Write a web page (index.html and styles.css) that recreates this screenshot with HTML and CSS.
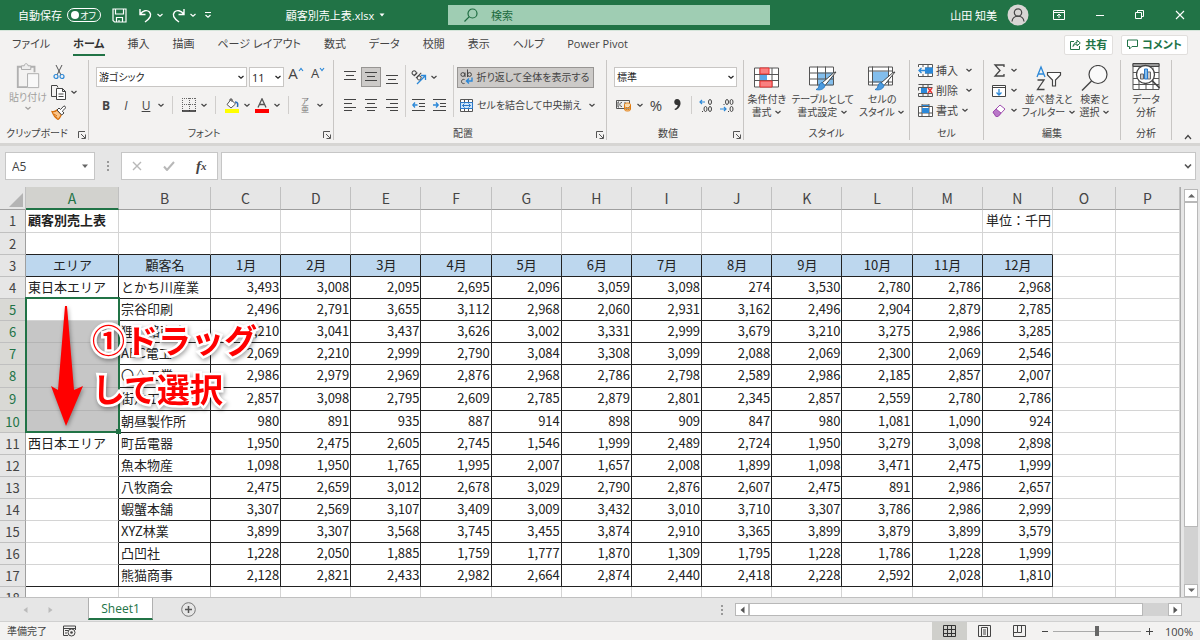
FILE: index.html
```html
<!DOCTYPE html>
<html lang="ja">
<head>
    <meta charset="UTF-8">
    <title>顧客別売上表.xlsx</title>
    <link rel="stylesheet" href="styles.css">
</head>
<body>

<!-- Shared icons -->
<svg class="symbols" aria-hidden="true">
    <symbol id="chev" viewBox="0 0 8 8"><path d="M1.5 3 L4 5.3 L6.5 3" fill="none" stroke="currentColor" stroke-width="1.2"/></symbol>
    <symbol id="launch" viewBox="0 0 8 8"><path d="M.5 7V.5H7M3 3l4 4M7.5 3.5v4h-4" fill="none" stroke="#555"/></symbol>
</svg>

<header class="titlebar">
    <div class="quick">
        <label class="autosave">自動保存
            <input type="checkbox">
            <span class="switch"><i></i>オフ</span>
        </label>
        <button class="save" aria-label="保存"><svg width="15" height="15" viewBox="0 0 15 15"><path d="M1 1h13v13H2.500L1 12.500zM3.500 1v5h8V1M4.500 14V9.500h6V14M7 12v2" fill="none" stroke="#fff" stroke-width="1.200"/></svg></button>
        <button aria-label="元に戻す"><svg width="15" height="15" viewBox="0 0 15 15"><path d="M2 1v5.500h5.500M2.300 6C5 2.500 9 1.500 11.500 4c2.500 3 1 6-4.500 10" fill="none" stroke="#fff" stroke-width="1.400"/></svg></button>
        <button class="drop"><svg width="8" height="8"><use href="#chev"/></svg></button>
        <button aria-label="やり直し"><svg width="15" height="15" viewBox="0 0 15 15"><path d="M13 1v5.500H7.500M12.700 6C10 2.500 6 1.500 3.500 4c-2.500 3-1 6 4.500 10" fill="none" stroke="#fff" stroke-width="1.400"/></svg></button>
        <button class="drop"><svg width="8" height="8"><use href="#chev"/></svg></button>
        <button aria-label="カスタマイズ"><svg width="8" height="8" viewBox="0 0 8 8"><path d="M1 1.500h6M1.500 4L4 6.300 6.500 4" fill="none" stroke="#fff" stroke-width="1.200"/></svg></button>
    </div>
    <button class="filename">顧客別売上表.xlsx <svg width="8" height="8" viewBox="0 0 8 8"><path d="M1.500 2.500h5L4 5.500z" fill="#fff"/></svg></button>
    <label class="search">
        <svg width="14" height="14" viewBox="0 0 14 14"><circle cx="8.500" cy="5.500" r="4.500" fill="none" stroke="#1d6b40" stroke-width="1.200"/><path d="M5.300 8.700L.5 13.500" stroke="#1d6b40" stroke-width="1.200"/></svg>
        <input type="text" placeholder="検索">
    </label>
    <div class="window">
        <span>山田 知美</span>
        <svg width="22" height="22" viewBox="0 0 22 22"><circle cx="11" cy="11" r="10.500" fill="#d8d6d4"/><circle cx="11" cy="8.500" r="3.700" fill="none" stroke="#444" stroke-width="1.200"/><path d="M5 17.500c.5-7 11.500-7 12 0" fill="none" stroke="#444" stroke-width="1.200"/></svg>
        <button class="mode" aria-label="リボンの表示"><svg width="12" height="10" viewBox="0 0 12 10"><path d="M.5.5h11v9H.5zM.5 2.500h11M6 8V4M4 6l2-2 2 2" fill="none" stroke="#fff"/></svg></button>
        <button aria-label="最小化"><svg width="10" height="10"><path d="M1 5.500h8" stroke="#fff"/></svg></button>
        <button aria-label="元のサイズ"><svg width="10" height="10" viewBox="0 0 10 10"><path d="M.5 2.500h6v6h-6zM2.500 2.500V.5h6v6h-2" fill="none" stroke="#fff"/></svg></button>
        <button aria-label="閉じる"><svg width="10" height="10"><path d="M1 1l8 8M9 1L1 9" stroke="#fff" stroke-width="1.100"/></svg></button>
    </div>
</header>

<nav class="tabs">
    <button>ファイル</button>
    <button class="active">ホーム</button>
    <button>挿入</button>
    <button>描画</button>
    <button>ページ レイアウト</button>
    <button>数式</button>
    <button>データ</button>
    <button>校閲</button>
    <button>表示</button>
    <button>ヘルプ</button>
    <button>Power Pivot</button>
    <div class="share">
        <button><svg width="11" height="11" viewBox="0 0 11 11"><path d="M4 2.500H.5v8h9V7M3 7.500c.5-3 2-4 4-4V1.200L10.300 4 7 6.800V5C5.500 5 4 5.500 3 7.500z" fill="none" stroke="#217346"/></svg>共有</button>
        <button><svg width="11" height="11" viewBox="0 0 11 11"><path d="M.5 1h10v6.500H5L2.500 10V7.500h-2z" fill="none" stroke="#217346"/></svg>コメント</button>
    </div>
</nav>

<div class="ribbon">
    <section class="group has-launcher">
        <div class="body clipboard">
            <button class="big paste">
                <svg width="26" height="28" viewBox="0 0 26 28"><path d="M6 4H2v22h10M16 4h4v6" fill="none" stroke="#b0b0b0" stroke-width="2"/><path d="M6 3h3c0-3 4-3 4 0h3v4H6z" fill="#eee" stroke="#aaa"/><path d="M12.500 11.500h12v15h-12z" fill="#f8f8f8" stroke="#aaa"/></svg>
                貼り付け
                <svg width="8" height="8"><use href="#chev"/></svg>
            </button>
            <div class="stack">
                <button class="tool" aria-label="切り取り"><svg width="12" height="16" viewBox="0 0 12 16"><path d="M3 1l5 10M9 1L4 11" stroke="#555" fill="none"/><circle cx="3" cy="12.500" r="2" fill="none" stroke="#2b88d8" stroke-width="1.200"/><circle cx="9" cy="12.500" r="2" fill="none" stroke="#2b88d8" stroke-width="1.200"/></svg></button>
                <div class="line">
                    <button class="tool" aria-label="コピー"><svg width="16" height="15" viewBox="0 0 16 15"><path d="M5 11.500H.5V.5H6l1 2" fill="none" stroke="#444"/><path d="M5.500 3.500h6l3 3v8h-9zM11.500 3.500v3h3M7.500 9h5M7.500 11.500h5" fill="#fff" stroke="#444"/></svg></button>
                    <button class="drop"><svg width="8" height="8"><use href="#chev"/></svg></button>
                </div>
                <button class="tool" aria-label="書式のコピー"><svg width="16" height="15" viewBox="0 0 16 15"><path d="M1 6.500c2 .5 3.500 0 5-1.500l4.500 4.500C9 12 9 13 7 14.500 4.500 13 2.500 10.500 1 6.500z" fill="#fbc58b" stroke="#d8700c" stroke-width="1.200"/><path d="M3 9l3 2M4.500 11.500l2 1.500" stroke="#d8700c"/><path d="M6 5l2-2 1.500 1.500L13 .8 15 2.500l-3.700 3.700L13 8l-2.300 2z" fill="#fff" stroke="#444"/></svg></button>
            </div>
        </div>
        <h2>クリップボード</h2>
        <button class="launcher" aria-label="クリップボードの詳細"><svg width="8" height="8"><use href="#launch"/></svg></button>
    </section>

    <section class="group has-launcher">
        <div class="body rows">
            <div class="line fontline">
                <span class="select font"><select aria-label="フォント"><option>游ゴシック</option></select><svg width="8" height="8"><use href="#chev"/></svg></span>
                <span class="select size"><select aria-label="サイズ"><option>11</option></select><svg width="8" height="8"><use href="#chev"/></svg></span>
                <button class="tool grow">A<svg width="6" height="5"><path d="M1 4l2-2.500L5 4" fill="none" stroke="#2b88d8" stroke-width="1.200"/></svg></button>
                <button class="tool shrink">A<svg width="6" height="5"><path d="M1 1l2 2.500L5 1" fill="none" stroke="#2b88d8" stroke-width="1.200"/></svg></button>
            </div>
            <div class="line">
                <button class="tool letter"><b>B</b></button>
                <button class="tool letter"><i>I</i></button>
                <button class="tool letter"><u>U</u></button>
                <button class="drop"><svg width="8" height="8"><use href="#chev"/></svg></button>
                <span class="sep"></span>
                <button class="tool" aria-label="罫線"><svg width="14" height="14" viewBox="0 0 14 14"><path d="M.5 0v13M13.500 0v13M7.500 0v13M0 .5h14M0 6.500h14" stroke="#666" stroke-dasharray="1 1"/><path d="M0 13h14" stroke="#222" stroke-width="1.500"/></svg></button>
                <button class="drop"><svg width="8" height="8"><use href="#chev"/></svg></button>
                <span class="sep"></span>
                <button class="tool" aria-label="塗りつぶしの色"><svg width="14" height="15" viewBox="0 0 14 15"><path d="M6 1.500L10.500 6 6 10 2 6.500zM5 3V1h2v3" fill="#fff" stroke="#555"/><path d="M10 4c3 0 3 2 2.500 5" fill="none" stroke="#2b6cb8" stroke-width="1.500"/><path d="M0 11h14v4H0z" fill="#ff0"/></svg></button>
                <button class="drop"><svg width="8" height="8"><use href="#chev"/></svg></button>
                <button class="tool" aria-label="フォントの色"><svg width="14" height="15" viewBox="0 0 14 15"><path d="M3 9.500L7 .8l4 8.700M4.500 6.500h5" fill="none" stroke="#555" stroke-width="1.300"/><path d="M0 11h14v4H0z" fill="#f00"/></svg></button>
                <button class="drop"><svg width="8" height="8"><use href="#chev"/></svg></button>
                <span class="sep"></span>
                <button class="tool ruby"><span>ア</span><span>亜</span></button>
                <button class="drop"><svg width="8" height="8"><use href="#chev"/></svg></button>
            </div>
        </div>
        <h2>フォント</h2>
        <button class="launcher" aria-label="フォントの詳細"><svg width="8" height="8"><use href="#launch"/></svg></button>
    </section>

    <section class="group has-launcher">
        <div class="body align">
            <div class="rows">
                <div class="line gap1">
                    <button class="tool" aria-label="上揃え"><svg width="12" height="14"><path d="M0 1.500h12M2 5.500h8M0 9.500h12" stroke="#444"/></svg></button>
                    <button class="tool pressed" aria-label="上下中央揃え"><svg width="12" height="14"><path d="M0 2.500h12M2 6.500h8M0 10.500h12" stroke="#444"/></svg></button>
                    <button class="tool" aria-label="下揃え"><svg width="12" height="14"><path d="M0 5.500h12M2 9.500h8M0 13.500h12" stroke="#444"/></svg></button>
                </div>
                <div class="line gap1">
                    <button class="tool" aria-label="左揃え"><svg width="12" height="14"><path d="M0 1.500h12M0 5.500h8M0 9.500h12M0 12.500h8" stroke="#444"/></svg></button>
                    <button class="tool" aria-label="中央揃え"><svg width="12" height="14"><path d="M0 1.500h12M2 5.500h8M0 9.500h12M2 12.500h8" stroke="#444"/></svg></button>
                    <button class="tool" aria-label="右揃え"><svg width="12" height="14"><path d="M0 1.500h12M4 5.500h8M0 9.500h12M4 12.500h8" stroke="#444"/></svg></button>
                </div>
            </div>
            <span class="sep tight tall"></span>
            <div class="rows">
                <div class="line">
                    <button class="tool" aria-label="方向"><svg width="16" height="16" viewBox="0 0 16 16"><g transform="rotate(45 6 6)" fill="none" stroke="#444"><circle cx="2.500" cy="6.500" r="2"/><path d="M4.500 4v5M7.500 1.500V9"/><circle cx="9.500" cy="6.500" r="2"/></g><path d="M6 15l8-8M10 6.500h4.500V11" fill="none" stroke="#2b88d8" stroke-width="1.300"/></svg></button>
                    <button class="drop"><svg width="8" height="8"><use href="#chev"/></svg></button>
                </div>
                <div class="line gap1">
                    <button class="tool" aria-label="インデントを減らす"><svg width="14" height="14"><path d="M0 1.500h13M7 5.500h6M7 8.500h6M0 12.500h13" stroke="#444"/><path d="M5.500 7H1M3 4.500L.8 7 3 9.500" fill="none" stroke="#2b88d8" stroke-width="1.300"/></svg></button>
                    <button class="tool" aria-label="インデントを増やす"><svg width="14" height="14"><path d="M0 1.500h13M7 5.500h6M7 8.500h6M0 12.500h13" stroke="#444"/><path d="M0 7h5M3 4.500L5.200 7 3 9.500" fill="none" stroke="#2b88d8" stroke-width="1.300"/></svg></button>
                </div>
            </div>
            <span class="sep tight tall"></span>
            <div class="rows">
                <div class="line"><button class="text pressed"><svg width="13" height="16" viewBox="0 0 13 16"><g fill="none" stroke="#444"><circle cx="2.800" cy="5.500" r="1.900"/><path d="M5 3.500V8M7.500.5V8M4.500 10.500c-4-1-4 5 0 4"/><circle cx="9.500" cy="5.500" r="1.900"/></g><path d="M12 8.500V12H7M9 9.500L6.500 12 9 14.500" fill="none" stroke="#2b88d8" stroke-width="1.400"/></svg>折り返して全体を表示する</button></div>
                <div class="line"><button class="text"><svg width="13" height="13" viewBox="0 0 13 13"><path d="M.5.5h12v12H.5zM4.500.5v3M8.500.5v3M4.500 9.500v3M8.500 9.500v3" fill="#fff" stroke="#555"/><path d="M.5 3.500h12v6H.5z" fill="#cfe6fa" stroke="#2b78c8"/><path d="M2.500 6.500h8M4.500 4.500l-2 2 2 2M8.500 4.500l2 2-2 2" fill="none" stroke="#2b78c8"/></svg>セルを結合して中央揃え</button><button class="drop"><svg width="8" height="8"><use href="#chev"/></svg></button></div>
            </div>
        </div>
        <h2>配置</h2>
        <button class="launcher" aria-label="配置の詳細"><svg width="8" height="8"><use href="#launch"/></svg></button>
    </section>

    <section class="group has-launcher">
        <div class="body rows">
            <div class="line"><span class="select format"><select aria-label="表示形式"><option>標準</option></select><svg width="8" height="8"><use href="#chev"/></svg></span></div>
            <div class="line gap1">
                <button class="tool" aria-label="通貨"><svg width="16" height="14" viewBox="0 0 16 14"><path d="M.5 2.500h13v8H.5z" fill="#eee" stroke="#555"/><path d="M6 4.500c-3 0-3 4 0 4M3 4H2v5h1M9 4v3" fill="none" stroke="#555"/><path d="M8.500 6.500c0-2 6-2 6 0v5c0 2-6 2-6 0zM8.500 8.500c1 1.500 5 1.500 6 0M8.500 10.500c1 1.500 5 1.500 6 0" fill="#fbd9a8" stroke="#e07b10"/></svg></button>
                <button class="drop"><svg width="8" height="8"><use href="#chev"/></svg></button>
                <button class="tool percent">%</button>
                <button class="tool" aria-label="桁区切り"><svg width="8" height="12" viewBox="0 0 8 12"><path d="M4 0c5 0 5 9-2 11l-.5-1C4 9 5 7 4.500 6 .5 7 0 0 4 0z" fill="#333"/></svg></button>
                <span class="sep tight"></span>
                <button class="tool" aria-label="小数点以下の表示桁数を増やす"><svg width="15" height="15" viewBox="0 0 15 15"><path d="M6 4H1M3 2L1 4l2 2" fill="none" stroke="#2b88d8" stroke-width="1.200"/><g fill="none" stroke="#444"><ellipse cx="11" cy="4" rx="1.500" ry="2.500"/><ellipse cx="6.500" cy="11" rx="1.500" ry="2.500"/><ellipse cx="11" cy="11" rx="1.500" ry="2.500"/><path d="M3 13.500h1"/></g></svg></button>
                <button class="tool" aria-label="小数点以下の表示桁数を減らす"><svg width="15" height="15" viewBox="0 0 15 15"><path d="M0 11h6M4 9l2 2-2 2" fill="none" stroke="#2b88d8" stroke-width="1.200"/><g fill="none" stroke="#444"><ellipse cx="7" cy="4" rx="1.500" ry="2.500"/><ellipse cx="11.500" cy="4" rx="1.500" ry="2.500"/><ellipse cx="11.500" cy="11" rx="1.500" ry="2.500"/><path d="M3.500 6.500h1M8 13.500h1"/></g></svg></button>
            </div>
        </div>
        <h2>数値</h2>
        <button class="launcher" aria-label="数値の詳細"><svg width="8" height="8"><use href="#launch"/></svg></button>
    </section>

    <section class="group">
        <div class="body bigs">
            <button class="big">
                <svg width="26" height="22" viewBox="0 0 26 22"><path d="M.5 1h24v19H.5zM6 1v19M18 1v19M.5 7.500h24M.5 13.500h24" fill="#fff" stroke="#555"/><path d="M6 1h9v6H6zM6 14h12v6H6z" fill="#f98080" stroke="#e33"/><path d="M6 8h7v5H6z" fill="#5aa7e8"/></svg>
                <span>条件付き<br>書式 <svg width="8" height="8"><use href="#chev"/></svg></span>
            </button>
            <button class="big">
                <svg width="28" height="25" viewBox="0 0 28 25"><path d="M.5 1.500h24v18H.5z" fill="#fff"/><path d="M9 7h15v13H9z" fill="#83beec"/><path d="M.5 1.500h24v18H.5zM8.500 1v19M16.500 1v19M.5 7.500h24M.5 13.500h24" fill="none" stroke="#555"/><path d="M27 6.500L16 20l-3-2.500L25 7z" fill="#fff" stroke="#444"/><path d="M13 17l3 3c-1 4-5 5-9 4 4-1 2-6 6-7z" fill="#4b9be0" stroke="#2878c0"/></svg>
                <span>テーブルとして<br>書式設定 <svg width="8" height="8"><use href="#chev"/></svg></span>
            </button>
            <button class="big">
                <svg width="28" height="25" viewBox="0 0 28 25"><path d="M.5 1.500h24v18H.5z" fill="#fff"/><path d="M5 6h15v11H5z" fill="#83beec"/><path d="M.5 1.500h24v18H.5zM4.500 1v19M20.500 1v19M.5 5.500h24M.5 16.500h24" fill="none" stroke="#555"/><path d="M27 6.500L16 20l-3-2.500L25 7z" fill="#fff" stroke="#444"/><path d="M13 17l3 3c-1 4-5 5-9 4 4-1 2-6 6-7z" fill="#4b9be0" stroke="#2878c0"/></svg>
                <span>セルの<br>スタイル <svg width="8" height="8"><use href="#chev"/></svg></span>
            </button>
        </div>
        <h2>スタイル</h2>
    </section>

    <section class="group">
        <div class="body cells">
            <button><svg width="15" height="13" viewBox="0 0 15 13"><path d="M.5.5h14v12H.5zM5 .5v12M10 .5v12M.5 4h14M.5 9h14" fill="#fff" stroke="#555"/><path d="M7 3.500h8v6H7z" fill="#2b88d8"/><path d="M0 3h7v7H0z" fill="#f3f2f1"/><path d="M7 6.500H1M3.500 4L1 6.500 3.500 9" fill="none" stroke="#2b88d8" stroke-width="1.300"/></svg>挿入<svg class="end" width="8" height="8"><use href="#chev"/></svg></button>
            <button><svg width="15" height="13" viewBox="0 0 15 13"><path d="M.5.500h14M.5 3.500h14M5 .5v3M10 .5v3M.5 9.500h14v3H.5zM5 9.500v3M10 9.500v3M.5 3.500v3" fill="none" stroke="#555"/><path d="M3 4h6v5H3z" fill="#2b88d8"/><path d="M10 4l4 5M14 4l-4 5" stroke="#e33" stroke-width="1.500"/></svg>削除<svg class="end" width="8" height="8"><use href="#chev"/></svg></button>
            <button><svg width="15" height="13" viewBox="0 0 15 13"><path d="M.5 2.500h14v10H.5zM4 0v13M11 0v13M.5 9h14M4 1h7" fill="#fff" stroke="#555"/><path d="M4 4h7v5H4z" fill="#2b88d8"/><path d="M4 1.500h7" stroke="#2b88d8"/></svg>書式<svg width="8" height="8"><use href="#chev"/></svg></button>
        </div>
        <h2>セル</h2>
    </section>

    <section class="group">
        <div class="body editing">
            <div class="cells">
                <button aria-label="合計"><svg width="15" height="13" viewBox="0 0 15 13"><path d="M12 3V1H3l5 5.500L3 12h9v-2" fill="none" stroke="#444" stroke-width="1.300"/></svg><svg width="8" height="8"><use href="#chev"/></svg></button>
                <button aria-label="フィル"><svg width="15" height="13" viewBox="0 0 15 13"><path d="M.5 1.500h13v11H.5zM.5 3.500h13" fill="#fff" stroke="#444"/><path d="M7 5v6M4.500 8.500L7 11l2.500-2.500" fill="none" stroke="#2b88d8" stroke-width="1.300"/></svg><svg width="8" height="8"><use href="#chev"/></svg></button>
                <button aria-label="クリア"><svg width="15" height="13" viewBox="0 0 15 13"><path d="M1 8l7-7 5 4-7 7.500H4z" fill="#fff" stroke="#a04fb0"/><path d="M1 8l3-3 5 4-3 3.500H4z" fill="#b978c8" stroke="#a04fb0"/></svg><svg width="8" height="8"><use href="#chev"/></svg></button>
            </div>
            <button class="big sort">
                <svg width="28" height="26" viewBox="0 0 28 26"><path d="M2 12L6 2l4 10M3.500 9h5" fill="none" stroke="#2b88d8" stroke-width="1.300"/><path d="M2.500 15H9L2.500 24.500h7" fill="none" stroke="#444" stroke-width="1.300"/><path d="M12.500 7.500h13v2.500l-5 5v6h-3v-6l-5-5z" fill="#fff" stroke="#444" stroke-width="1.200"/></svg>
                <span>並べ替えと<br>フィルター <svg width="8" height="8"><use href="#chev"/></svg></span>
            </button>
            <button class="big find">
                <svg width="28" height="26" viewBox="0 0 28 26"><circle cx="17" cy="9.500" r="9" fill="#fafafa" stroke="#444" stroke-width="1.200"/><path d="M10.500 16L1 25.500" stroke="#444" stroke-width="1.400"/></svg>
                <span>検索と<br>選択 <svg width="8" height="8"><use href="#chev"/></svg></span>
            </button>
        </div>
        <h2>編集</h2>
    </section>

    <section class="group">
        <div class="body bigs">
            <button class="big analyze">
                <svg width="28" height="28" viewBox="0 0 28 28"><path d="M1 1h26v26H1zM1 10h26M1 16h26M1 22h26M7 5v22M14 5v22M21 5v22" fill="#fff" stroke="#555"/><path d="M1 1h26v3H1z" fill="#999" stroke="#444"/><circle cx="13.500" cy="12" r="9" fill="#fff" stroke="#444" stroke-width="1.300"/><path d="M8.500 11.500h3v5h-3zM15.500 9.500h3v7h-3z" fill="#ccc" stroke="#666"/><path d="M12.500 6.500h3v10h-3z" fill="#83beec" stroke="#2b78c8"/><path d="M20 18l7.500 7.500" stroke="#444" stroke-width="1.600"/></svg>
                <span>データ<br>分析</span>
            </button>
        </div>
        <h2>分析</h2>
    </section>

    <button class="collapse" aria-label="リボンを折りたたむ"><svg width="8" height="6"><path d="M1 5l3-3.500L7 5" fill="none" stroke="#444" stroke-width="1.200"/></svg></button>
</div>

<div class="formulabar">
    <label class="namebox"><input type="text" value="A5" aria-label="名前ボックス"><svg width="8" height="8" viewBox="0 0 8 8"><path d="M1 2.500h6L4 6z" fill="#666"/></svg></label>
    <span class="dots"><i></i><i></i><i></i></span>
    <div class="fxbox">
        <button aria-label="キャンセル"><svg width="10" height="10"><path d="M1 1l8 8M9 1L1 9" stroke="#b8b8b8" stroke-width="1.400"/></svg></button>
        <button aria-label="入力"><svg width="12" height="10"><path d="M1 5.500L4 9l7-8" fill="none" stroke="#b8b8b8" stroke-width="2"/></svg></button>
        <button class="fx">f<sub>x</sub></button>
    </div>
    <label class="formula"><input type="text" aria-label="数式バー"><svg width="8" height="8" viewBox="0 0 8 8"><path d="M1 2.500L4 5.500l3-3" fill="none" stroke="#555" stroke-width="1.600"/></svg></label>
</div>

<main class="sheet">
    <div class="grid">
        <table id="sheet">
            <colgroup>
                <col class="rownum"><col class="area"><col class="client">
                <col span="12">
                <col class="blank-o"><col class="blank-p">
            </colgroup>
            <thead></thead>
            <tbody></tbody>
        </table>
        <div class="note">
            <svg width="36" height="124" viewBox="0 0 36 124"><path d="M17 1h2l7 84 9-4L18 121 3 81l7 4z" fill="#f00"/></svg>
            <p>①ドラッグ<br>して選択</p>
        </div>
    </div>
    <div class="vscroll">
        <button aria-label="上へ"><svg width="7" height="5"><path d="M0 4.500L3.500 1 7 4.500z" fill="#666"/></svg></button>
        <div class="track"><div class="thumb"></div></div>
        <button aria-label="下へ"><svg width="7" height="5"><path d="M0 .5L3.500 4 7 .5z" fill="#666"/></svg></button>
    </div>
</main>

<div class="sheettabs">
    <div class="arrows">
        <button aria-label="前のシート"><svg width="5" height="8"><path d="M4.500 1v6L.5 4z" fill="#bbb"/></svg></button>
        <button aria-label="次のシート"><svg width="5" height="8"><path d="M.5 1v6l4-3z" fill="#bbb"/></svg></button>
    </div>
    <button class="sheettab">Sheet1</button>
    <button class="add" aria-label="新しいシート"><svg width="15" height="15" viewBox="0 0 15 15"><circle cx="7.500" cy="7.500" r="6.800" fill="none" stroke="#777"/><path d="M7.500 4v7M4 7.500h7" stroke="#555" stroke-width="1.500"/></svg></button>
    <span class="dots"><i></i><i></i><i></i></span>
    <div class="hscroll">
        <button aria-label="左へ"><svg width="5" height="8"><path d="M4.500 .5v7L.5 4z" fill="#555"/></svg></button>
        <div class="track"><div class="thumb"></div></div>
        <button aria-label="右へ"><svg width="5" height="8"><path d="M.5 .5v7l4-3.500z" fill="#555"/></svg></button>
    </div>
</div>

<footer class="status">
    <span>準備完了</span>
    <svg width="13" height="12" viewBox="0 0 13 12"><path d="M5 10.500H.5V1h12v4M.5 3.500h12M2 5.500h3M2 8h2" fill="none" stroke="#444"/><circle cx="8.500" cy="7.500" r="3.500" fill="#f3f2f1" stroke="#444"/><circle cx="8.500" cy="7.500" r="1.300" fill="#444"/></svg>
    <div class="views">
        <button class="on" aria-label="標準"><svg width="13" height="12" viewBox="0 0 13 12"><path d="M.5.5h12v11H.5zM4.500 0v12M8.500 0v12M0 4.500h13M0 8.500h13" fill="none" stroke="#333"/></svg></button>
        <button aria-label="ページ レイアウト"><svg width="13" height="12" viewBox="0 0 13 12"><path d="M.5.5h12v11H.5zM3.500 2.500h6v9h-6zM5 5h3M5 7h3M5 9h3" fill="none" stroke="#444"/></svg></button>
        <button aria-label="改ページ プレビュー"><svg width="13" height="12" viewBox="0 0 13 12"><path d="M.5.5h12v11H.5zM4.500.5v7h4v-7M.5 7.500h4" fill="none" stroke="#444"/></svg></button>
    </div>
    <div class="zoom">
        <button aria-label="縮小"><svg width="8" height="8"><path d="M1 4.500h6" stroke="#444"/></svg></button>
        <input type="range" min="0" max="200" value="100" aria-label="ズーム">
        <button aria-label="拡大"><svg width="8" height="8"><path d="M1 4.500h7M4.500 1v7" stroke="#444"/></svg></button>
        <span>100%</span>
    </div>
</footer>

<script src="script.js"></script>
</body>
</html>
```

FILE: styles.css
```css
* {
    box-sizing: border-box;
}
body {
    margin: 0;
    height: 100vh;
    display: flex;
    flex-direction: column;
    overflow: hidden;
    background-color: #e6e6e6;
    color: #444;
    font-family: "Open Sans", "Noto Sans CJK JP", sans-serif;
    font-feature-settings: "palt";
    font-size: 10px;
    line-height: 13px;
}
button, input, select {
    margin: 0;
    padding: 0;
    border: 0;
    background: none;
    color: inherit;
    font: inherit;
    font-feature-settings: inherit;
}
button {
    display: flex;
    align-items: center;
    justify-content: center;
    white-space: nowrap;
}
svg {
    flex: none;
}
h2 {
    margin: 0;
    font-size: 10px;
    font-weight: normal;
}
.symbols {
    position: absolute;
    width: 0;
    height: 0;
}

/* Title bar */
.titlebar {
    display: grid;
    grid-template-columns: 248px 200px 322px 1fr;
    align-items: center;
    height: 31px;
    border-bottom: 1px solid #d5e5da;
    background-color: #217346;
    color: #fff;
    font-size: 11px;
}
.quick {
    display: flex;
    align-items: center;
    padding-left: 18px;
}
.quick button {
    margin-right: 2px;
}
.quick .drop {
    margin-right: 6px;
}
.quick .save {
    margin: 0 11px;
}
.autosave {
    display: flex;
    align-items: center;
    gap: 5px;
}
.autosave input {
    position: absolute;
    opacity: 0;
}
.switch {
    display: flex;
    align-items: center;
    justify-content: space-between;
    width: 34px;
    height: 14px;
    padding: 0 4px 0 3px;
    border: 1px solid #fff;
    border-radius: 7px;
    font-size: 9px;
}
.switch i {
    width: 8px;
    height: 8px;
    border-radius: 4px;
    background-color: #fff;
}
.filename {
    justify-self: center;
    gap: 4px;
    margin-right: 24px;
}
.search {
    display: flex;
    align-items: center;
    gap: 13px;
    height: 20px;
    padding-left: 16px;
    background-color: #9fcdb3;
}
.search input {
    flex: 1;
    min-width: 0;
}
.search input::placeholder {
    color: #1d6b40;
    opacity: 1;
}
.window {
    display: flex;
    align-items: center;
    justify-content: flex-end;
    gap: 10px;
    padding-right: 15px;
}
.window button + button {
    margin-left: 20px;
}
.window .mode {
    margin: 0 0 0 14px;
}

/* Tabs */
.tabs {
    display: flex;
    align-items: center;
    gap: 23px;
    height: 27px;
    padding: 0 12px;
    background-color: #f3f2f1;
    font-size: 11px;
}
.tabs > button {
    height: 23px;
    border-bottom: 2px solid transparent;
}
.tabs > .active {
    border-color: #217346;
    font-weight: bold;
    color: #333;
}
.share {
    display: flex;
    gap: 8px;
    margin-left: auto;
}
.share button {
    gap: 4px;
    height: 20px;
    padding: 0 5px;
    border: 1px solid #e1dfdd;
    border-radius: 2px;
    background-color: #fff;
    color: #217346;
    font-weight: bold;
}

/* Ribbon */
.ribbon {
    display: grid;
    grid-template-columns: 89px 245px 273px 137px 166px 74px 137px 51px 1fr;
    padding: 2px 0 3px;
    border-bottom: 3px solid #d6d5d3;
    background-color: #f3f2f1;
}
.group {
    position: relative;
    display: flex;
    flex-direction: column;
    border-right: 1px solid #c8c6c4;
}
.group h2 {
    height: 13px;
    text-align: center;
}
.body {
    height: 67px;
}
.clipboard {
    display: flex;
    padding: 2px 0 0 9px;
}
.has-launcher h2 {
    margin-right: 14px;
}
.launcher {
    position: absolute;
    right: 2px;
    bottom: 1px;
}
.rows {
    display: flex;
    flex-direction: column;
    padding-top: 3px;
}
.body.rows {
    padding-left: 7px;
}
.line {
    display: flex;
    align-items: center;
    height: 28px;
}
.gap1 {
    gap: 1px;
}
.fontline {
    gap: 2px;
}
.tool {
    width: 20px;
    height: 20px;
}
.drop {
    width: 10px;
    height: 20px;
}
.sep {
    width: 1px;
    height: 18px;
    margin: 0 6px;
    background-color: #d0cecc;
}
.sep.tight {
    margin: 0 3px;
}
.sep.tall {
    height: 52px;
    margin-top: 5px;
}
.pressed {
    border: 1px solid #979593;
    background-color: #cccac8;
}
.big {
    flex-direction: column;
    justify-content: flex-start;
    padding-top: 5px;
}
.big > svg:first-child {
    height: 28px;
    padding-bottom: 2px;
}
.paste {
    width: 38px;
    padding-top: 1px;
    color: #a19f9d;
}
.stack {
    display: flex;
    flex-direction: column;
    padding-left: 2px;
}
.stack .line {
    height: 20px;
}
.select {
    position: relative;
    height: 20px;
    border: 1px solid #c8c6c4;
    background-color: #fff;
    color: #222;
}
.select select {
    width: 100%;
    height: 18px;
    padding-left: 2px;
    appearance: none;
}
.select svg {
    position: absolute;
    right: 1px;
    top: 5px;
}
.font {
    width: 151px;
}
.size {
    width: 35px;
    font-size: 11px;
}
.format {
    width: 123px;
}
.grow {
    align-items: flex-start;
    font-size: 15px;
}
.shrink {
    align-items: flex-start;
    font-size: 13px;
}
.letter {
    font-size: 12px;
}
.ruby {
    flex-direction: column;
    font-size: 8px;
    line-height: 8px;
    color: #777;
}
.percent {
    font-size: 15px;
}
.align {
    display: flex;
    padding-left: 6px;
}
.text {
    gap: 4px;
    height: 21px;
    padding: 0 4px 0 2px;
    border: 1px solid transparent;
}
.text.pressed {
    width: 137px;
    border-color: #979593;
}
.bigs {
    display: flex;
    justify-content: center;
    gap: 5px;
}
.cells {
    display: flex;
    flex-direction: column;
    font-size: 11px;
}
.body.cells {
    padding-left: 8px;
}
.cells button {
    justify-content: flex-start;
    gap: 3px;
    height: 20px;
}
.cells .end {
    margin-left: 4px;
}
.editing {
    display: flex;
    justify-content: space-between;
    padding: 0 10px 0 8px;
}
.analyze {
    padding-top: 2px;
}
.analyze > svg:first-child {
    height: 31px;
}
.collapse {
    align-self: end;
    padding-left: 4px;
}

/* Formula bar */
.formulabar {
    display: flex;
    align-items: center;
    padding: 6px 4px 7px 5px;
}
.namebox, .fxbox, .formula {
    display: flex;
    align-items: center;
    height: 28px;
    border: 1px solid #c6c6c6;
    background-color: #fff;
}
.namebox {
    width: 90px;
    padding: 0 5px 0 6px;
    font-size: 12px;
}
.namebox input, .formula input {
    flex: 1;
    min-width: 0;
}
.dots {
    display: flex;
    flex-direction: column;
    gap: 2px;
    margin: 0 12px;
}
.dots i {
    width: 2px;
    height: 2px;
    background-color: #999;
}
.fxbox {
    justify-content: space-around;
    width: 97px;
    margin-right: 3px;
}
.fx {
    font-family: "Liberation Serif", serif;
    font-size: 15px;
    font-style: italic;
    font-weight: bold;
}
.fx sub {
    font-size: 11px;
}
.formula {
    flex: 1;
    padding-right: 3px;
}

/* Sheet */
.sheet {
    display: flex;
    flex: 1;
    min-height: 0;
    gap: 3px;
    padding-right: 2px;
}
.grid {
    position: relative;
    flex: 1;
    overflow: hidden;
    border-right: 1px solid #ababab;
    background-color: #fff;
    font-family: "Noto Sans CJK JP", sans-serif;
    font-feature-settings: normal;
    font-size: 13px;
    line-height: 18px;
}
#sheet {
    width: 100%;
    table-layout: fixed;
    border-collapse: separate;
    border-spacing: 0;
}
.rownum {
    width: 26px;
}
.area {
    width: 93px;
}
.client {
    width: 92px;
}
.blank-o {
    width: 63px;
}
.blank-p {
    width: 64px;
}
#sheet th, #sheet td {
    height: 22px;
    padding: 0 1px 2px 2px;
    border-right: 1px solid #d4d4d4;
    border-bottom: 1px solid #d4d4d4;
    color: #222;
    font-weight: normal;
    white-space: nowrap;
}
#sheet .first th, #sheet .first td, #sheet .high th, #sheet .high td, #sheet thead th {
    height: 23px;
}
#sheet thead th, #sheet tbody th {
    padding: 0;
    border-color: #c0c0c0;
    background-color: #e6e6e6;
    color: #444;
    text-align: center;
}
#sheet thead th {
    border-bottom-color: #9f9f9f;
    font-size: 14px;
}
#sheet tbody th {
    border-right-color: #9f9f9f;
}
#sheet thead th.picked {
    border-bottom: 2px solid #217346;
    background-color: #d2d2ce;
    color: #217346;
}
#sheet tbody th.picked {
    background-color: #d9d9d5;
    color: #217346;
}
#sheet .corner svg {
    display: block;
    margin: 3px 2px 0 auto;
}
#sheet .line-below {
    border-bottom-color: #222;
}
#sheet .boxed {
    border-right-color: #222;
    border-bottom-color: #222;
}
#sheet .side {
    border-right-color: #222;
}
#sheet .label {
    background-color: #bdd7ee;
    text-align: center;
}
#sheet .num {
    text-align: right;
}
#sheet .title {
    font-weight: bold;
}
#sheet .shaded {
    border-bottom-color: #b4b4b4;
    background-color: #c6c6c6;
}
#sheet .start {
    position: relative;
}
.selection {
    position: absolute;
    z-index: 1;
    top: -2px;
    left: -1px;
    width: 95px;
    height: 136px;
    border: 2px solid #217346;
}
.selection::after {
    content: "";
    position: absolute;
    right: -3px;
    bottom: -3px;
    width: 5px;
    height: 5px;
    background-color: #217346;
}
.note {
    position: absolute;
    z-index: 2;
    top: 118px;
    left: 48px;
    display: flex;
    gap: 8px;
    filter: drop-shadow(1px 2px 2px rgba(0,0,0,0.35));
}
.note p {
    margin: 0;
    padding-top: 10px;
    color: #f00;
    font-size: 33px;
    font-weight: bold;
    line-height: 49px;
    -webkit-text-stroke: 5px #fff;
    paint-order: stroke fill;
}

/* Scroll bars */
.vscroll {
    display: flex;
    flex-direction: column;
    width: 14px;
    padding-top: 2px;
}
.vscroll button, .hscroll button {
    width: 14px;
    height: 13px;
    border: 1px solid #b8b8b8;
    background-color: #fff;
}
.track {
    flex: 1;
    background-color: #d2d2d2;
}
.thumb {
    border: 1px solid #b8b8b8;
    background-color: #fff;
}
.vscroll .thumb {
    height: 85%;
}
.hscroll .thumb {
    width: 94%;
    height: 13px;
}

/* Sheet tabs */
.sheettabs {
    display: flex;
    align-items: center;
    height: 24px;
    padding-right: 18px;
    border-top: 1px solid #c0c0c0;
}
.arrows {
    display: flex;
    gap: 20px;
    width: 88px;
    padding-left: 23px;
}
.sheettab {
    align-self: flex-start;
    width: 65px;
    height: 22px;
    border: solid #b0b0b0;
    border-width: 0 1px;
    border-bottom: 2px solid #217346;
    background-color: #fff;
    color: #217346;
    font-size: 12px;
}
.add {
    margin: 0 auto 0 28px;
}
.hscroll {
    display: flex;
    width: 447px;
}

/* Status bar */
.status {
    display: flex;
    align-items: center;
    gap: 16px;
    height: 19px;
    padding: 0 7px;
    border-top: 1px solid #d0d0d0;
    background-color: #f3f2f1;
}
.views {
    display: flex;
    margin-left: auto;
}
.views button {
    width: 35px;
    height: 18px;
}
.views .on {
    background-color: #cfcfcb;
}
.zoom {
    display: flex;
    align-items: center;
    gap: 4px;
    margin-left: -12px;
}
.zoom input {
    width: 88px;
    height: 12px;
    appearance: none;
    background: linear-gradient(#aaa, #aaa) center / 100% 1px no-repeat;
}
.zoom input::-webkit-slider-thumb {
    width: 4px;
    height: 10px;
    appearance: none;
    background-color: #666;
}
.zoom span {
    margin-left: 8px;
    font-size: 11px;
}
```

FILE: script.js
```js
var columns = 'ABCDEFGHIJKLMNOP'.split('');

// Area, client, then January to December
var sales = [
    ['東日本エリア', 'とかち川産業', 3493, 3008, 2095, 2695, 2096, 3059, 3098, 274, 3530, 2780, 2786, 2968],
    ['', '宗谷印刷', 2496, 2791, 3655, 3112, 2968, 2060, 2931, 3162, 2496, 2904, 2879, 2785],
    ['', '狸小路商店', 3210, 3041, 3437, 3626, 3002, 3331, 2999, 3679, 3210, 3275, 2986, 3285],
    ['', 'ABC電工', 2069, 2210, 2999, 2790, 3084, 3308, 3099, 2088, 2069, 2300, 2069, 2546],
    ['', '〇△工業', 2986, 2979, 2969, 2876, 2968, 2786, 2798, 2589, 2986, 2185, 2857, 2007],
    ['', '街角工業', 2857, 3098, 2795, 2609, 2785, 2879, 2801, 2345, 2857, 2559, 2780, 2786],
    ['', '朝昼製作所', 980, 891, 935, 887, 914, 898, 909, 847, 980, 1081, 1090, 924],
    ['西日本エリア', '町岳電器', 1950, 2475, 2605, 2745, 1546, 1999, 2489, 2724, 1950, 3279, 3098, 2898],
    ['', '魚本物産', 1098, 1950, 1765, 1995, 2007, 1657, 2008, 1899, 1098, 3471, 2475, 1999],
    ['', '八牧商会', 2475, 2659, 3012, 2678, 3029, 2790, 2876, 2607, 2475, 891, 2986, 2657],
    ['', '蝦蟹本舗', 3307, 2569, 3107, 3409, 3009, 3432, 3010, 3710, 3307, 3786, 2986, 2999],
    ['', 'XYZ林業', 3899, 3307, 3568, 3745, 3455, 3874, 2910, 3365, 3899, 3879, 3899, 3579],
    ['', '凸凹社', 1228, 2050, 1885, 1759, 1777, 1870, 1309, 1795, 1228, 1786, 1228, 1999],
    ['', '熊猫商事', 2128, 2821, 2433, 2982, 2664, 2874, 2440, 2418, 2228, 2592, 2028, 1810]
];

var table = document.getElementById('sheet');

// Column letters
var head = '<th class="corner"><svg width="14" height="14"><path d="M14 0v14H0z" fill="#b4b4b4"/></svg></th>';
columns.forEach(function(letter) {
    head += `<th${letter == 'A' ? ' class="picked"' : ''}>${letter}</th>`;
});
table.tHead.innerHTML = `<tr>${head}</tr>`;

function cell(row, col) {
    var text = '';
    var names = [];
    var inTable = col < 14;

    if (row == 1) {
        if (col == 0) { text = '顧客別売上表'; names.push('title'); }
        if (col == 13) { text = '単位：千円'; names.push('num'); }
    } else if (row == 2 && inTable) {
        names.push('line-below');
    } else if (row == 3 && inTable) {
        text = col == 0 ? 'エリア' : col == 1 ? '顧客名' : (col - 1) + '月';
        names.push('label', 'boxed');
    } else if (row > 3 && row < 18 && inTable) {
        text = sales[row - 4][col];
        if (col > 1) {
            text = text.toLocaleString('en-US');
            names.push('num');
        }
        // The area column has no lines between its empty cells
        names.push(col > 0 || row == 4 || row == 10 || row == 17 ? 'boxed' : 'side');
        if (col == 0 && row > 5 && row < 11) names.push('shaded');
        if (col == 0 && row == 5) {
            names.push('start');
            text = '<span class="selection"></span>';
        }
    }
    return `<td class="${names.join(' ')}">${text}</td>`;
}

var rows = '';
for (var row = 1; row <= 18; row++) {
    var kind = row == 1 ? 'first' : row == 8 || row == 9 ? 'high' : '';
    rows += `<tr class="${kind}"><th${row > 4 && row < 11 ? ' class="picked"' : ''}>${row}</th>`;
    for (var col = 0; col < columns.length; col++) {
        rows += cell(row, col);
    }
    rows += '</tr>';
}
table.tBodies[0].innerHTML = rows;
```
